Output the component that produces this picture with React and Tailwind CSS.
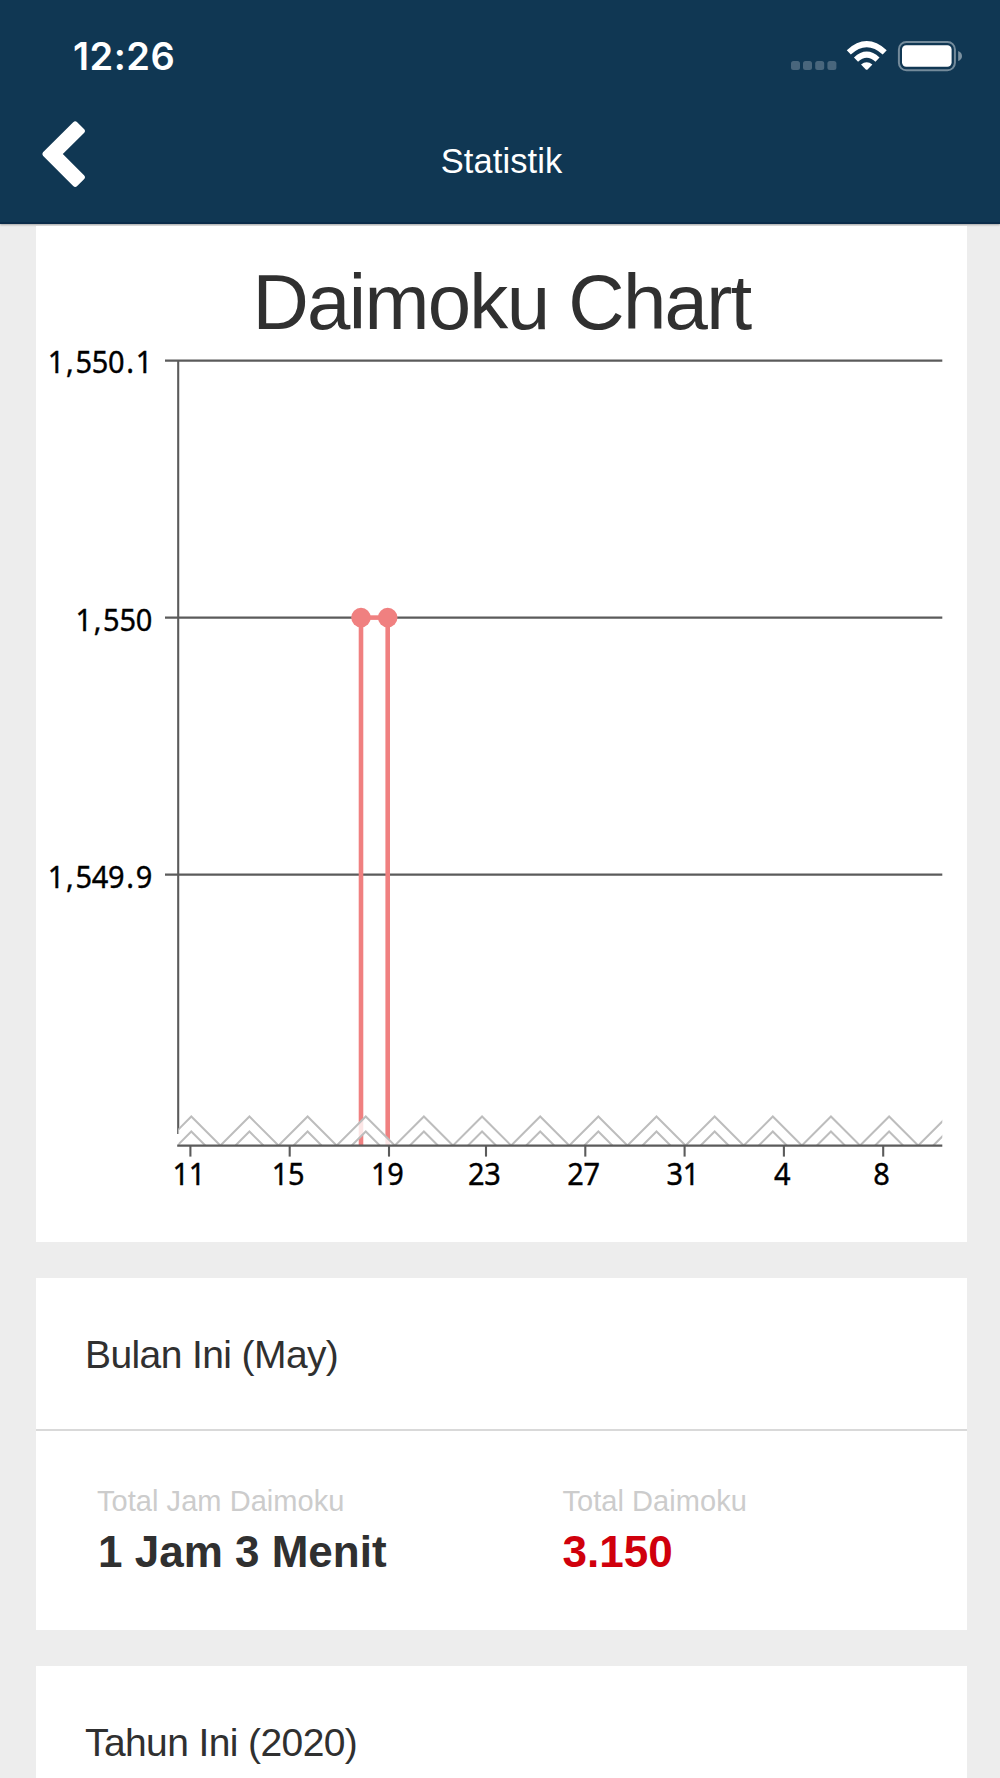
import React from 'react'

const Y_TICKS = [
  { label: '1,550.1', y: 360.6, baseline: 373.3 },
  { label: '1,550', y: 617.6, baseline: 631 },
  { label: '1,549.9', y: 874.6, baseline: 887.6 },
]

const X_TICKS = [
  { label: '11', x: 190.4 },
  { label: '15', x: 289.7 },
  { label: '19', x: 389 },
  { label: '23', x: 486 },
  { label: '27', x: 585.3 },
  { label: '31', x: 684.6 },
  { label: '4', x: 783.9 },
  { label: '8', x: 883.2 },
]

const POINTS = [361, 387.7]

const PEAKS = Array.from({ length: 14 }, (_, i) => 191.3 + i * 58.15)

// Axis labels are slightly condensed
const CONDENSE = 0.92

const advance = (char) => (/[.,]/.test(char) ? 11.4 : 16.3)

// x position of every glyph, so digits and separators keep their own advance
const glyphPositions = (label, end) => {
  const width = [...label].reduce((sum, char) => sum + advance(char), 0)
  let x = end - width
  return [...label].map((char) => {
    const current = x + advance(char) / 2
    x += advance(char)
    return (current / CONDENSE).toFixed(1)
  })
}

const AxisLabel = ({ label, end, baseline }) => (
  <text x={glyphPositions(label, end).join(' ')} y={baseline} textAnchor="middle">
    {label}
  </text>
)

const StatusBar = () => (
  <div className="flex h-28 items-center justify-between pl-[73px] pr-[37px]">
    <span className="font-['Inter',sans-serif] text-[38px] font-semibold leading-none tracking-[0.5px]">
      12:26
    </span>
    <svg className="h-[32px] w-[172px]" viewBox="791 40 172 32">
      <g fill="#fff" fillOpacity="0.24">
        <rect x="791" y="61" width="9" height="9" rx="2.5" />
        <rect x="803" y="61" width="9" height="9" rx="2.5" />
        <rect x="815.2" y="61" width="9" height="9" rx="2.5" />
        <rect x="827.4" y="61" width="9" height="9" rx="2.5" />
      </g>
      <g fill="none" stroke="#fff" strokeWidth="6">
        <path d="M848.8 52.4 Q866.7 36 884.7 52.4" />
        <path d="M856 59.6 Q866.7 49.6 877.5 59.6" />
      </g>
      <path d="M861 64.5 Q866.7 59.8 872.4 64.5 L867.6 69.4 Q866.7 70.2 865.8 69.4 Z" fill="#fff" />
      <rect x="898.9" y="41.9" width="56" height="28.4" rx="7.5" fill="none" stroke="#fff" strokeOpacity="0.42" strokeWidth="2" />
      <rect x="902" y="45.3" width="49.6" height="21.4" rx="4.2" fill="#fff" />
      <path d="M958.2 51 Q962 52.5 962 56 Q962 59.5 958.2 61 Z" fill="#fff" fillOpacity="0.45" />
    </svg>
  </div>
)

const NavBar = () => (
  <div className="grid h-[84px] grid-cols-3 items-center">
    <button type="button" aria-label="Back" className="pl-[41px]">
      <svg className="block h-[68px] w-[46px]" viewBox="41 120 46 68" fill="#fff">
        <path d="M73.2 122.2 Q75.2 120.2 77.2 122.2 L84 129 Q86 131 84 133 L62.8 154 L84 175.2 Q86 177.2 84 179.2 L77.2 186 Q75.2 188 73.2 186 L43 155.8 Q41.6 154 43 152.2 Z" />
      </svg>
    </button>
    <h1 className="pb-1 pl-[3px] pt-[17px] text-center text-[34.5px] leading-[34px] tracking-[0.1px]">Statistik</h1>
  </div>
)

const DaimokuChart = () => (
  <svg className="block h-[904px] w-full" viewBox="36 338 931 904">
    <defs>
      <clipPath id="plot">
        <rect x="178.3" y="1100" width="764" height="46" />
      </clipPath>
    </defs>

    <g stroke="#5b5b5b" strokeWidth="2.1">
      {Y_TICKS.map(({ label, y }) => (
        <line key={label} x1="165" x2="942.3" y1={y} y2={y} />
      ))}
      <line x1="178.2" x2="178.2" y1="360.6" y2="1134" />
    </g>

    <g stroke="#f08080" strokeWidth="4.6" fill="#f08080">
      {POINTS.map((x) => (
        <line key={x} x1={x} x2={x} y1="617.6" y2="1145" />
      ))}
      <line x1={POINTS[0]} x2={POINTS[1]} y1="617.6" y2="617.6" />
      {POINTS.map((x) => (
        <circle key={x} cx={x} cy="617.6" r="9.8" stroke="none" />
      ))}
    </g>

    {/* Axis break */}
    <g clipPath="url(#plot)">
      {PEAKS.map((x) => (
        <g key={x}>
          <path
            d={`M${x - 29} 1145.5 L${x} 1116.5 L${x + 29} 1145.5 H${x + 14} L${x} 1131.5 L${x - 14} 1145.5 Z`}
            fill="#fff"
            fillOpacity="0.8"
          />
          <path
            d={`M${x - 29} 1145.5 L${x} 1116.5 L${x + 29} 1145.5 M${x - 14} 1145.5 L${x} 1131.5 L${x + 14} 1145.5`}
            fill="none"
            stroke="#bdbdbd"
            strokeWidth="2"
          />
        </g>
      ))}
    </g>

    <g stroke="#5b5b5b" strokeWidth="2.1">
      <line x1="177.2" x2="942.3" y1="1145.6" y2="1145.6" />
      {X_TICKS.map(({ label, x }) => (
        <line key={label} x1={x} x2={x} y1="1145.6" y2="1156.6" />
      ))}
    </g>

    <g
      fill="#000"
      stroke="#000"
      strokeWidth="0.4"
      fontSize="31.5"
      transform={`scale(${CONDENSE} 1)`}
      className="font-['Noto_Sans',sans-serif]"
    >
      {Y_TICKS.map(({ label, baseline }) => (
        <AxisLabel key={label} label={label} end={152.2} baseline={baseline} />
      ))}
      {X_TICKS.map(({ label, x }) => (
        <AxisLabel key={label} label={label} end={x - 1.6 + label.length * 8.15} baseline={1184.6} />
      ))}
    </g>
  </svg>
)

const SectionTitle = ({ children }) => (
  <h3 className="flex h-[151px] items-center pl-[49px] pt-px text-[39px] leading-none tracking-[-0.6px]">
    {children}
  </h3>
)

const Stat = ({ label, value, accent }) => (
  <div className="pl-[61px]">
    <p className="text-[29px] leading-[36px] tracking-[0.05px] text-[#cccccc]">{label}</p>
    <p className={`mt-[9px] text-[44px] font-bold leading-[48px] ${accent ? 'text-[#d0000c]' : 'pl-px'}`}>
      {value}
    </p>
  </div>
)

export default function App() {
  return (
    <div className="flex h-[1778px] w-[1000px] flex-col overflow-hidden bg-[#ededed] font-['Liberation_Sans',Arial,sans-serif] text-[#303030]">
      <header className="h-[224px] shrink-0 border-b-2 border-[#0b2c4a] bg-[#103753] text-white shadow-[0_1px_2px_rgba(0,0,0,0.3)]">
        <StatusBar />
        <NavBar />
      </header>

      <main className="flex flex-col gap-9 pl-9 pr-[33px] pt-[2px]">
        <section className="h-[1016px] shrink-0 bg-white pt-[36px]">
          <h2 className="h-[76px] text-center text-[78px] leading-[80px] tracking-[-1.7px]">Daimoku Chart</h2>
          <DaimokuChart />
        </section>

        <section className="h-[352px] shrink-0 bg-white">
          <SectionTitle>Bulan Ini (May)</SectionTitle>
          <div className="grid grid-cols-2 border-t-2 border-[#d9d9d9] pt-[52px]">
            <Stat label="Total Jam Daimoku" value="1 Jam 3 Menit" />
            <Stat label="Total Daimoku" value="3.150" accent />
          </div>
        </section>

        <section className="h-[352px] shrink-0 bg-white">
          <SectionTitle>Tahun Ini (2020)</SectionTitle>
        </section>
      </main>
    </div>
  )
}
